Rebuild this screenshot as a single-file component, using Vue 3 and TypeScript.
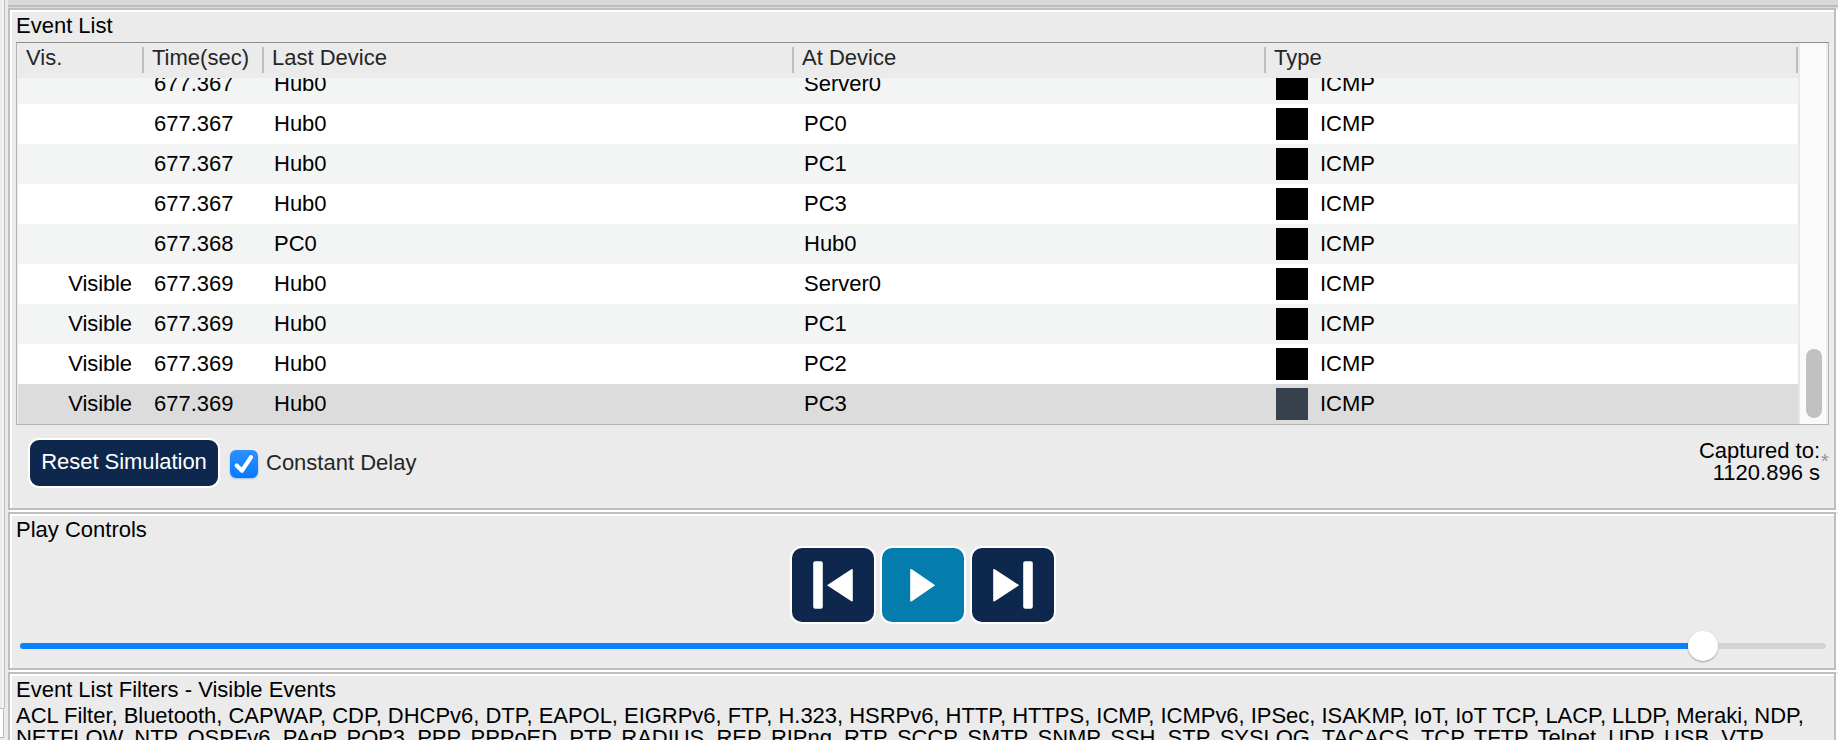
<script setup lang="ts">
interface SimEvent { visible: boolean; time: string; last: string; at: string; selected?: boolean }

const columns: string[] = ['Vis.', 'Time(sec)', 'Last Device', 'At Device', 'Type']
const events: SimEvent[] = [
  { visible: false, time: '677.367', last: 'Hub0', at: 'Server0' },
  { visible: false, time: '677.367', last: 'Hub0', at: 'PC0' },
  { visible: false, time: '677.367', last: 'Hub0', at: 'PC1' },
  { visible: false, time: '677.367', last: 'Hub0', at: 'PC3' },
  { visible: false, time: '677.368', last: 'PC0', at: 'Hub0' },
  { visible: true, time: '677.369', last: 'Hub0', at: 'Server0' },
  { visible: true, time: '677.369', last: 'Hub0', at: 'PC1' },
  { visible: true, time: '677.369', last: 'Hub0', at: 'PC2' },
  { visible: true, time: '677.369', last: 'Hub0', at: 'PC3', selected: true },
]
const filterLines: string[] = [
  'ACL Filter, Bluetooth, CAPWAP, CDP, DHCPv6, DTP, EAPOL, EIGRPv6, FTP, H.323, HSRPv6, HTTP, HTTPS, ICMP, ICMPv6, IPSec, ISAKMP, IoT, IoT TCP, LACP, LLDP, Meraki, NDP,',
  'NETFLOW, NTP, OSPFv6, PAgP, POP3, PPP, PPPoED, PTP, RADIUS, REP, RIPng, RTP, SCCP, SMTP, SNMP, SSH, STP, SYSLOG, TACACS, TCP, TFTP, Telnet, UDP, USB, VTP',
]
</script>

<template>
  <div class="window">
    <div class="gutter"><div class="gutter-top"></div><div class="gutter-box"></div></div>
    <main class="main">
      <div class="topbar"></div>
      <section class="panel events">
        <h2 class="title">Event List</h2>
        <div class="list">
          <div class="table">
            <div class="row head">
              <div v-for="c in columns" :key="c" class="hcell"><span>{{ c }}</span></div>
            </div>
            <div class="body">
              <div v-for="(e, i) in events" :key="i" class="row" :class="{ selected: e.selected }">
                <div class="vis">{{ e.visible ? 'Visible' : '' }}</div>
                <div class="time">{{ e.time }}</div>
                <div class="cell">{{ e.last }}</div>
                <div class="cell">{{ e.at }}</div>
                <div class="type"><i class="swatch"></i><span>ICMP</span></div>
              </div>
            </div>
          </div>
          <div class="scroll"><div class="thumb"></div></div>
        </div>
        <div class="actions">
          <button class="reset">Reset Simulation</button>
          <span class="check">
            <svg viewBox="0 0 28 28" width="28" height="28"><path d="M6.7 15.5 12 20.7 21 7.2" /></svg>
          </span>
          <span class="delay">Constant Delay</span>
          <div class="captured">Captured to:<br />1120.896 s</div>
          <span class="star">*</span>
        </div>
      </section>
      <section class="panel play">
        <h2 class="title">Play Controls</h2>
        <div class="buttons">
          <button class="ctl">
            <svg viewBox="0 0 82 74" width="82" height="74"><rect x="21.2" y="13.2" width="9.6" height="47.6" rx="2" /><path d="M35 37.2 59 21.5Q60.8 20.3 60.8 22V52.6Q60.8 54.3 59 53Z" /></svg>
          </button>
          <button class="ctl active">
            <svg viewBox="0 0 82 74" width="82" height="74"><path d="M53.2 37.2 30.2 21.5Q28.2 20.3 28.2 22V52.6Q28.2 54.3 30.2 53Z" /></svg>
          </button>
          <button class="ctl">
            <svg viewBox="0 0 82 74" width="82" height="74"><rect x="51.2" y="13.2" width="9.6" height="47.6" rx="2" /><path d="M47.2 37.2 23.2 21.5Q21.2 20.3 21.2 22V52.6Q21.2 54.3 23.2 53Z" /></svg>
          </button>
        </div>
        <div class="slider"><div class="fill"></div><div class="knob"></div><div class="rest"></div></div>
      </section>
      <section class="panel filters">
        <h2 class="title">Event List Filters - Visible Events</h2>
        <p v-for="(l, i) in filterLines" :key="i" class="line">{{ l }}</p>
      </section>
    </main>
  </div>
</template>

<style>
html, body { margin: 0; overflow: hidden; }
</style>

<style scoped>
.window { width: 1838px; height: 740px; overflow: hidden; display: flex; background: #ebebeb; color: #000; font: 22px/22px "Liberation Sans", Arial, sans-serif; }
.gutter { width: 8px; height: 740px; box-sizing: border-box; flex: none; display: flex; flex-direction: column; }
.gutter-top { height: 708px; box-sizing: border-box; width: 5px; background: #f5f5f5; border-right: 1px solid #b9b9b9; border-left: 2px solid #ebebeb; }
.gutter-box { height: 30px; width: 4px; background: #fff; border: solid #b9b9b9; border-width: 1px 1px 1px 0; box-sizing: border-box; }
.main { width: 1830px; flex: none; }
.topbar { height: 8px; box-sizing: border-box; background: linear-gradient(#d9d9d9 5px, #bebebe 5px, #bebebe 7px, #d9d9d9 7px); }
.panel { box-sizing: border-box; border: 2px solid #bebebe; box-shadow: inset 2px 2px #fff, 2px 2px #fff; width: 1828px; padding: 0 6px; }
.title { margin: 0; font-size: 22px; font-weight: 400; line-height: 22px; white-space: nowrap; }
.events { height: 502px; padding-top: 5px; }
.play { height: 158px; margin-top: 2px; padding-top: 5px; }
.filters { height: 80px; margin-top: 2px; padding-top: 5px; }
.list { margin-top: 5px; width: 1813px; height: 383px; box-sizing: border-box; display: flex; border: 1px solid #b4b4b4; border-top-color: #8d8d8d; }
.table { width: 1780px; flex: none; margin-left: 1px; display: flex; flex-direction: column; }
.row { display: grid; grid-template-columns: 126px 120px 530px 472px 1fr; }
.head { height: 35px; color: #262626; }
.hcell { height: 26px; margin-top: 4px; padding-left: 8px; box-sizing: border-box; border-right: 2px solid #bebebe; line-height: 21px; white-space: nowrap; }
.body { height: 346px; overflow: hidden; display: flex; flex-direction: column; justify-content: flex-end; }
.body .row { height: 40px; flex: none; line-height: 40px; background: #fff; }
.body .row:nth-child(odd) { background: #f3f5f5; }
.body .row.selected { background: #dcdcdc; }
.vis { text-align: right; padding-right: 12px; letter-spacing: -0.1px; }
.time, .cell { padding-left: 10px; }
.type { padding-left: 10px; display: flex; gap: 12px; }
.swatch { width: 32px; height: 32px; margin-top: 4px; background: #000; }
.selected .swatch { background: #37414e; }
.scroll { width: 30px; flex: none; box-sizing: border-box; background: #fafafa; border-left: 2px solid #e8e8e8; border-right: 2px solid #ededed; display: flex; flex-direction: column; justify-content: flex-end; }
.thumb { width: 16px; height: 69px; margin: 0 0 6px 6px; border-radius: 8px; background: #c1c1c1; }
.actions { display: flex; align-items: flex-start; }
button { padding: 0; font: inherit; }
.reset { margin: 13px 0 0 12px; width: 192px; height: 50px; border: 2px solid #fff; border-radius: 11px; background: #0d274d; color: #fff; line-height: 42px; padding-bottom: 2px; letter-spacing: -0.05px; white-space: nowrap; }
.check { width: 28px; height: 28px; margin: 25px 0 0 10px; border-radius: 6px; background: linear-gradient(#2e92ff, #0479ff); box-shadow: 0 1px 2px #0a6ce055; }
.check svg { display: block; fill: none; stroke: #fff; stroke-width: 4.2; stroke-linecap: round; stroke-linejoin: round; }
.delay { margin: 27px 0 0 8px; color: #262626; white-space: nowrap; }
.captured { margin: 15px 0 0 auto; text-align: right; white-space: nowrap; }
.star { box-sizing: border-box; width: 8px; padding-left: 1px; color: #969696; font-size: 20px; margin-top: 25px; }
.buttons { display: flex; gap: 4px; justify-content: center; margin-top: 5px; padding-left: 2px; }
.ctl { width: 86px; height: 78px; border: 2px solid #fff; border-radius: 12px; background: #0d274d; }
.ctl.active { background: #047dae; }
.ctl svg { display: block; fill: #fff; }
.slider { height: 30px; margin: 7px 0 0 4px; display: flex; align-items: center; }
.fill { width: 1668px; height: 6px; border-radius: 3px 0 0 3px; background: #0a82ff; }
.knob { width: 30px; height: 30px; border-radius: 50%; background: #fff; box-shadow: 0 1px 2px #0005; flex: none; }
.rest { width: 108px; height: 6px; border-radius: 0 3px 3px 0; background: #d3d3d3; }
.line { margin: 0; white-space: nowrap; letter-spacing: -0.03px; }
.line:first-of-type { margin-top: 4px; }
</style>
